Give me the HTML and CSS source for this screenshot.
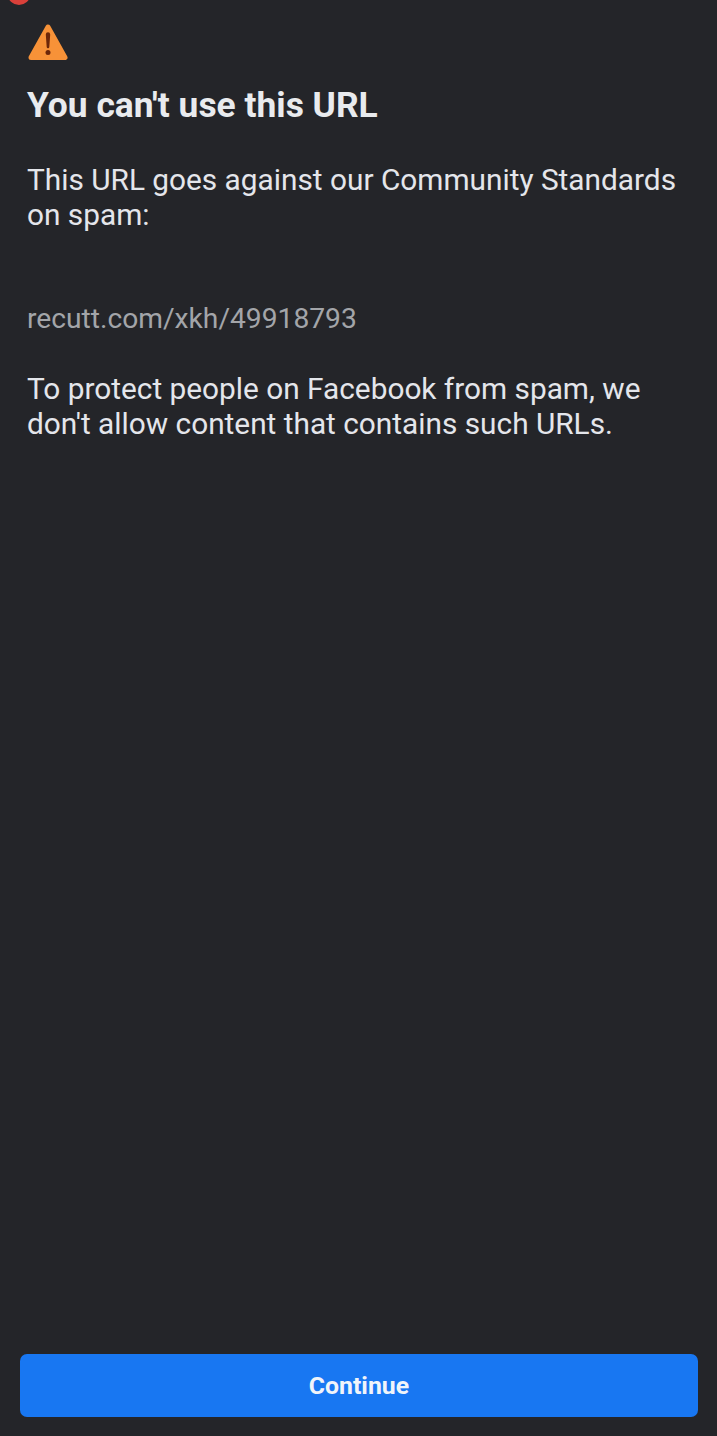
FILE: index.html
```html
<!DOCTYPE html>
<html lang="en">
<head>
    <meta charset="UTF-8">
    <meta name="viewport" content="width=device-width, initial-scale=1.0">
    <title>You can't use this URL</title>
    <link rel="stylesheet" href="styles.css">
</head>
<body>

<div class="badge"></div>

<div class="page">
    <div class="content">
        <svg class="warn" width="42" height="38" viewBox="0 0 42 38">
            <path d="M21 4 L38 34.5 L4 34.5 Z" fill="#f79238" stroke="#f79238" stroke-width="5" stroke-linejoin="round"/>
            <path d="M18.8 11.5 a2.2 2.2 0 0 1 4.4 0 L22.3 24 a1.3 1.3 0 0 1 -2.6 0 Z" fill="#6b2609"/>
            <circle cx="21" cy="29.5" r="2.5" fill="#6b2609"/>
        </svg>

        <h1>You can't use this URL</h1>

        <p class="message">This URL goes against our Community Standards on spam:</p>
        <p class="url">recutt.com/xkh/49918793</p>
        <p class="message">To protect people on Facebook from spam, we don't allow content that contains such URLs.</p>
    </div>

    <button class="continue">Continue</button>
</div>

</body>
</html>
```

FILE: styles.css
```css
html, body{
    margin: 0;
    height: 100%;
}

body{
    background-color: #242529;
    font-family: Roboto, "Liberation Sans", sans-serif;
    overflow: hidden;
}

.badge{
    position: absolute;
    left: 8px;
    top: -15px;
    width: 22px;
    height: 20px;
    border-radius: 50%;
    background-color: #d9403a;
}

.page{
    height: 1436px;
    box-sizing: border-box;
    display: flex;
    flex-direction: column;
    justify-content: space-between;
    padding: 23px 19px 19px 20px;
}

.content{
    padding: 0 7px;
}

.warn{
    display: block;
}

h1{
    margin: 24px 0 0 0;
    font-size: 35.4px;
    line-height: 40px;
    font-weight: 700;
    color: #e9ebee;
}

.message{
    margin: 37px 0 0 0;
    font-size: 29.8px;
    line-height: 35px;
    color: #e4e6eb;
}

.url{
    margin: 69px 0 0 0;
    font-size: 28.2px;
    line-height: 35px;
    color: #a3a5a9;
}

.url + .message{
    margin-top: 35px;
}

.continue{
    height: 63px;
    border: none;
    border-radius: 7px;
    background-color: #1877f2;
    color: #f0f4fa;
    font-family: inherit;
    font-size: 24.8px;
    font-weight: 700;
}
```
